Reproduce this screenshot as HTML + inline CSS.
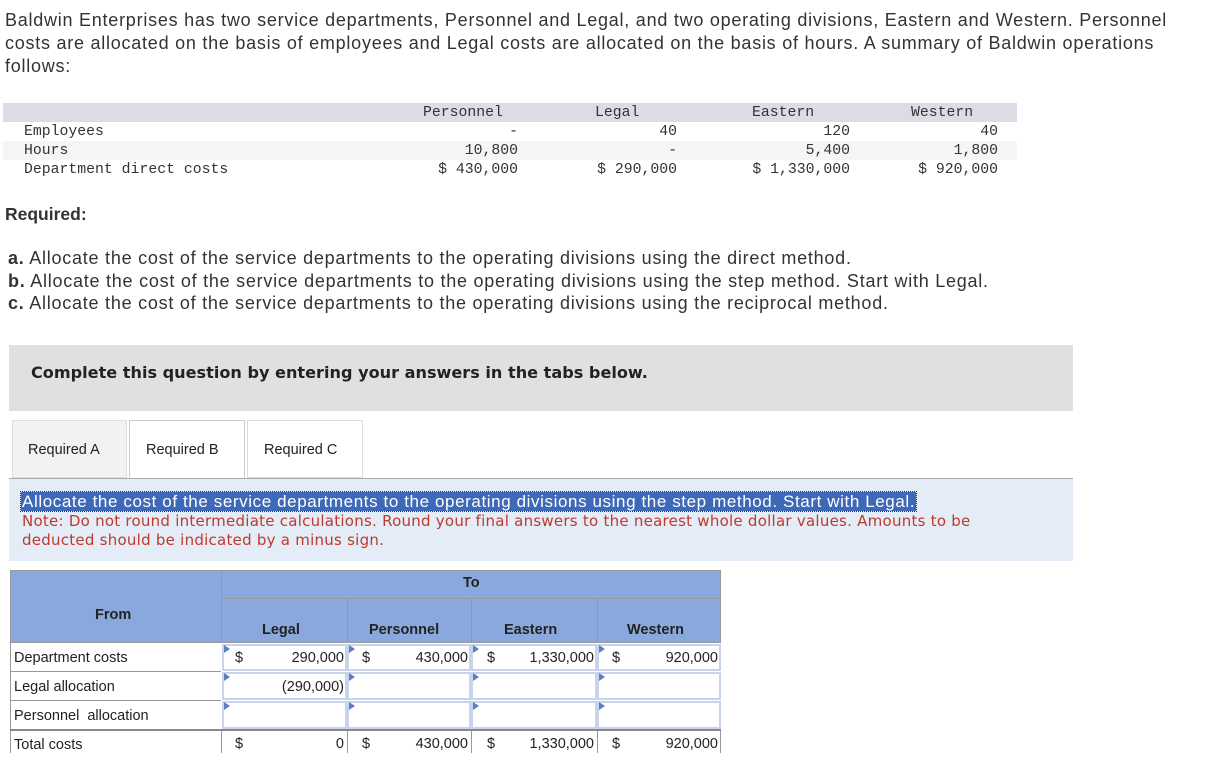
<!DOCTYPE html><html><head><style>
body{margin:0;width:1216px;height:773px;overflow:hidden;background:#fff;font-family:"Liberation Sans",Arial,sans-serif;color:#333;position:relative}
.a{position:absolute;white-space:nowrap}
.m{font-family:"Liberation Mono",monospace;font-size:14.8px;color:#333;line-height:16px}
.r{text-align:right}
.t{font-size:14.5px;color:#222}
.in{position:absolute;box-sizing:border-box;border:2px solid #c8d4ee;background:#fff}
.in:before{content:"";position:absolute;left:0;top:-1px;border-left:6px solid #5a7fc4;border-top:4px solid transparent;border-bottom:4px solid transparent}
.p{font-size:18px;letter-spacing:0.75px;color:#333}
</style></head><body>
<div class="a p" style="left:5px;top:9px;line-height:23px;white-space:normal;width:1175px;letter-spacing:0.75px">Baldwin Enterprises has two service departments, Personnel and Legal, and two operating divisions, Eastern and Western. Personnel costs are allocated on the basis of employees and Legal costs are allocated on the basis of hours. A summary of Baldwin operations follows:</div>

<div class="a" style="left:3px;top:103px;width:1014px;height:19px;background:#dcdde4"></div>
<div class="a" style="left:3px;top:141px;width:1014px;height:19px;background:#f5f5f5"></div>
<div class="a m" style="left:423px;top:105px">Personnel</div>
<div class="a m" style="left:595px;top:105px">Legal</div>
<div class="a m" style="left:752px;top:105px">Eastern</div>
<div class="a m" style="left:911px;top:105px">Western</div>
<div class="a m" style="left:24px;top:124px">Employees</div>
<div class="a m" style="left:24px;top:143px">Hours</div>
<div class="a m" style="left:24px;top:162px">Department direct costs</div>
<div class="a m r" style="right:698px;top:124px">-</div>
<div class="a m r" style="right:698px;top:143px">10,800</div>
<div class="a m r" style="right:698px;top:162px">$ 430,000</div>
<div class="a m r" style="right:539px;top:124px">40</div>
<div class="a m r" style="right:539px;top:143px">-</div>
<div class="a m r" style="right:539px;top:162px">$ 290,000</div>
<div class="a m r" style="right:366px;top:124px">120</div>
<div class="a m r" style="right:366px;top:143px">5,400</div>
<div class="a m r" style="right:366px;top:162px">$ 1,330,000</div>
<div class="a m r" style="right:218px;top:124px">40</div>
<div class="a m r" style="right:218px;top:143px">1,800</div>
<div class="a m r" style="right:218px;top:162px">$ 920,000</div>

<div class="a" style="left:5px;top:204px;font-size:17.5px;font-weight:bold;color:#333">Required:</div>
<div class="a p" style="left:8px;top:247px;line-height:22.5px"><b>a.</b> Allocate the cost of the service departments to the operating divisions using the direct method.<br><b>b.</b> Allocate the cost of the service departments to the operating divisions using the step method. Start with Legal.<br><b>c.</b> Allocate the cost of the service departments to the operating divisions using the reciprocal method.</div>

<div class="a" style="left:9px;top:345px;width:1064px;height:66px;background:#e0e0e0"></div>
<div class="a" style="left:31px;top:363px;font-size:16.1px;font-weight:bold;font-family:'DejaVu Sans',sans-serif;color:#222">Complete this question by entering your answers in the tabs below.</div>

<div class="a" style="left:12px;top:420px;width:115px;height:58px;background:#f2f2f2;border:1px solid #ddd;box-sizing:border-box"></div>
<div class="a" style="left:129px;top:420px;width:116px;height:60px;background:#fff;border:1px solid #ccc;border-bottom:none;box-sizing:border-box"></div>
<div class="a" style="left:247px;top:420px;width:116px;height:58px;background:#fff;border:1px solid #ddd;box-sizing:border-box"></div>
<div class="a t" style="left:28px;top:442px">Required A</div>
<div class="a t" style="left:146px;top:442px">Required B</div>
<div class="a t" style="left:264px;top:442px">Required C</div>
<div class="a" style="left:9px;top:478px;width:1064px;height:1px;background:#aaa"></div>
<div class="a" style="left:9px;top:479px;width:1064px;height:82px;background:#e3ecf7"></div>
<div class="a" style="left:21px;top:492px;font-size:17px;letter-spacing:0.6px;line-height:19px;background:#3d69b8;color:#fff;outline:1px dotted #333;padding:0 1px">Allocate the cost of the service departments to the operating divisions using the step method. Start with Legal.</div>
<div class="a" style="left:22px;top:512px;line-height:19px;color:#c0392b;font-family:'DejaVu Sans',sans-serif;font-size:15px;letter-spacing:0.25px;white-space:normal;width:1005px">Note: Do not round intermediate calculations. Round your final answers to the nearest whole dollar values. Amounts to be deducted should be indicated by a minus sign.</div>

<div class="a" style="left:10px;top:570px;width:711px;height:73px;background:#89a9de;border:1px solid #999;box-sizing:border-box"></div>
<div class="a" style="left:221px;top:570px;width:1px;height:73px;background:#999"></div>
<div class="a" style="left:221px;top:598px;width:500px;height:1px;background:#999"></div>
<div class="a" style="left:347px;top:598px;width:1px;height:45px;background:#999"></div>
<div class="a" style="left:471px;top:598px;width:1px;height:45px;background:#999"></div>
<div class="a" style="left:597px;top:598px;width:1px;height:45px;background:#999"></div>
<div class="a t" style="left:463px;top:575px;font-weight:bold">To</div>
<div class="a t" style="left:95px;top:607px;font-weight:bold">From</div>
<div class="a t" style="left:262px;top:622px;font-weight:bold">Legal</div>
<div class="a t" style="left:369px;top:622px;font-weight:bold">Personnel</div>
<div class="a t" style="left:504px;top:622px;font-weight:bold">Eastern</div>
<div class="a t" style="left:627px;top:622px;font-weight:bold">Western</div>

<div class="a" style="left:10px;top:643px;width:1px;height:110px;background:#999"></div>
<div class="a" style="left:10px;top:671px;width:211px;height:1px;background:#999"></div>
<div class="a" style="left:10px;top:700px;width:211px;height:1px;background:#999"></div>
<div class="a" style="left:10px;top:729px;width:711px;height:2px;background:#888"></div>
<div class="a t" style="left:14px;top:650px">Department costs</div>
<div class="a t" style="left:14px;top:679px">Legal allocation</div>
<div class="a t" style="left:14px;top:708px">Personnel&nbsp; allocation</div>
<div class="a t" style="left:14px;top:737px">Total costs</div>

<div class="in" style="left:222px;top:644px;width:125px;height:27px"></div>
<div class="in" style="left:347px;top:644px;width:124px;height:27px"></div>
<div class="in" style="left:471px;top:644px;width:126px;height:27px"></div>
<div class="in" style="left:597px;top:644px;width:124px;height:27px"></div>
<div class="in" style="left:222px;top:672px;width:125px;height:28px"></div>
<div class="in" style="left:347px;top:672px;width:124px;height:28px"></div>
<div class="in" style="left:471px;top:672px;width:126px;height:28px"></div>
<div class="in" style="left:597px;top:672px;width:124px;height:28px"></div>
<div class="in" style="left:222px;top:701px;width:125px;height:28px"></div>
<div class="in" style="left:347px;top:701px;width:124px;height:28px"></div>
<div class="in" style="left:471px;top:701px;width:126px;height:28px"></div>
<div class="in" style="left:597px;top:701px;width:124px;height:28px"></div>
<div class="a" style="left:221px;top:731px;width:1px;height:22px;background:#999"></div>
<div class="a" style="left:347px;top:731px;width:1px;height:22px;background:#999"></div>
<div class="a" style="left:471px;top:731px;width:1px;height:22px;background:#999"></div>
<div class="a" style="left:597px;top:731px;width:1px;height:22px;background:#999"></div>
<div class="a" style="left:720px;top:731px;width:1px;height:22px;background:#999"></div>

<div class="a t" style="left:235px;top:650px">$</div><div class="a t r" style="right:872px;top:650px">290,000</div>
<div class="a t" style="left:362px;top:650px">$</div><div class="a t r" style="right:748px;top:650px">430,000</div>
<div class="a t" style="left:487px;top:650px">$</div><div class="a t r" style="right:622px;top:650px">1,330,000</div>
<div class="a t" style="left:612px;top:650px">$</div><div class="a t r" style="right:498px;top:650px">920,000</div>
<div class="a t r" style="right:872px;top:679px">(290,000)</div>
<div class="a t" style="left:235px;top:736px">$</div><div class="a t r" style="right:872px;top:736px">0</div>
<div class="a t" style="left:362px;top:736px">$</div><div class="a t r" style="right:748px;top:736px">430,000</div>
<div class="a t" style="left:487px;top:736px">$</div><div class="a t r" style="right:622px;top:736px">1,330,000</div>
<div class="a t" style="left:612px;top:736px">$</div><div class="a t r" style="right:498px;top:736px">920,000</div>
</body></html>
